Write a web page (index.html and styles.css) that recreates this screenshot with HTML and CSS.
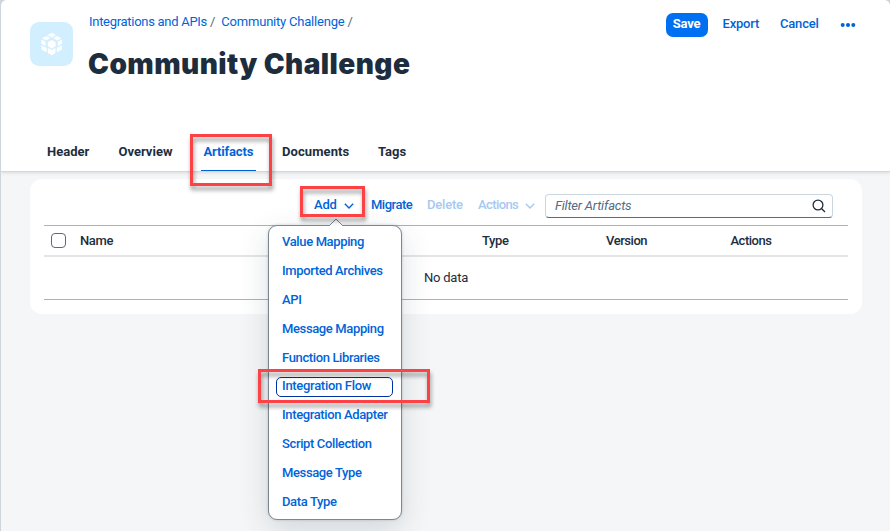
FILE: index.html
```html
<!DOCTYPE html>
<html lang="en">
<head>
<meta charset="utf-8">
<title>Community Challenge</title>
<link rel="stylesheet" href="styles.css">
</head>
<body>
<div class="page">
  <header class="header">
    <div class="header-top">
      <div class="avatar">
        <svg width="22" height="24" viewBox="0 0 22 24" fill="#fff">
          <path d="M10.700.700L15 3.100L10.700 5.600L6.400 3.100Z"/>
          <path d="M5.300 3.900L9.300 6.100L5.100 8.500L1 6.200Z"/>
          <path d="M16.100 3.900L20.400 6.200L16.300 8.500L12.100 6.100Z"/>
          <path d="M.4 7.400L4.500 9.700V14L.4 11.700Z"/>
          <path d="M21 7.400L16.900 9.700V14L21 11.700Z"/>
          <path d="M10.700 8L14.600 10.200V14.200L10.700 16.500L6.800 14.200V10.200Z"/>
          <path d="M.4 13.300L5.600 16V20.200L.4 17.500Z"/>
          <path d="M21 13.300L15.800 16V20.200L21 17.500Z"/>
          <path d="M6.900 16L10.700 18.100L14.500 16V21L10.700 23.300L6.900 21Z"/>
        </svg>
      </div>
      <div class="titles">
        <nav class="crumbs"><a class="crumb-one">Integrations and APIs</a><span class="slash">/</span><a class="crumb-two">Community Challenge</a><span class="slash">/</span></nav>
        <h1>Community Challenge</h1>
      </div>
      <div class="actions">
        <button class="save">Save</button>
        <a class="export">Export</a>
        <a class="cancel">Cancel</a>
        <svg class="more" width="16" height="6" viewBox="0 0 16 6" fill="#0064d9"><circle cx="2.700" cy="3" r="2"/><circle cx="8" cy="3" r="2"/><circle cx="13.300" cy="3" r="2"/></svg>
      </div>
    </div>
    <nav class="tabs">
      <a class="tab t-header">Header</a>
      <a class="tab t-overview">Overview</a>
      <a class="tab t-artifacts">Artifacts</a>
      <a class="tab t-documents">Documents</a>
      <a class="tab t-tags">Tags</a>
    </nav>
  </header>

  <section class="card">
    <div class="toolbar">
      <a class="tool add">Add <svg width="10" height="6" viewBox="0 0 10 6"><path d="M.8.800L5 5L9.200.800"/></svg></a>
      <a class="tool migrate">Migrate</a>
      <a class="tool off delete">Delete</a>
      <a class="tool off acts">Actions <svg width="10" height="6" viewBox="0 0 10 6"><path d="M.8.800L5 5L9.200.800"/></svg></a>
      <div class="search"><span>Filter Artifacts</span>
        <svg width="14" height="14" viewBox="0 0 14 14"><circle cx="6" cy="6" r="4.900"/><path d="M9.700 9.700L13 13"/></svg>
      </div>
    </div>
    <div class="table">
      <div class="thead">
        <span class="check"></span>
        <span class="th name">Name</span>
        <span class="th type">Type</span>
        <span class="th version">Version</span>
        <span class="th act">Actions</span>
      </div>
      <div class="empty">No data</div>
    </div>
  </section>
</div>

<div class="menu">
  <svg class="arrow" width="16" height="8" viewBox="0 0 16 8"><path d="M1 8L8 1L15 8" /></svg>
  <a>Value Mapping</a>
  <a>Imported Archives</a>
  <a>API</a>
  <a>Message Mapping</a>
  <a>Function Libraries</a>
  <a class="focused">Integration Flow</a>
  <a>Integration Adapter</a>
  <a>Script Collection</a>
  <a>Message Type</a>
  <a>Data Type</a>
</div>

<div class="mark mark-tab"></div>
<div class="mark mark-add"></div>
<div class="mark mark-flow"></div>
</body>
</html>
```
FILE: styles.css
```css
* { box-sizing: border-box; }
body {
  margin: 0;
  width: 890px;
  height: 531px;
  overflow: hidden;
  position: relative;
  background: #cfd5dc;
  font-family: Roboto, "Noto Sans", sans-serif;
  font-size: 13px;
  line-height: 16px;
  color: #1d2d3e;
  white-space: nowrap;
}
.page {
  margin-left: 1px;
  height: 531px;
  background: #f5f6f7;
  border-radius: 6px 6px 0 0;
  overflow: hidden;
}
.header {
  height: 171px;
  background: #fff;
  box-shadow: 0 1px 0 #d5d8db, 0 2px 3px #d9dbde;
  display: flex;
  flex-direction: column;
  justify-content: space-between;
}
.header-top { display: flex; padding: 13px 34px 0 29px; }
.avatar {
  width: 43px;
  height: 44px;
  margin-top: 9px;
  border-radius: 9px;
  background: #d1efff;
  display: flex;
  align-items: center;
  justify-content: center;
}
.titles { margin-left: 16px; padding-top: 1px; }
.crumbs { display: flex; color: #0064d9; }
.crumb-one { letter-spacing: -.29px; }
.crumb-two { letter-spacing: -.21px; }
.slash { color: #556b82; margin: 0 6px 0 3px; }
h1 {
  margin: 16px 0 0 -1px;
  font: 900 28px/36px Inter, "Open Sans", sans-serif;
  letter-spacing: .45px;
}
.actions {
  margin-left: auto;
  height: 23px;
  display: flex;
  align-items: center;
  color: #0064d9;
  font-weight: 500;
  letter-spacing: -.2px;
}
.save {
  width: 42px;
  height: 24px;
  padding: 0 0 2px;
  border: 0;
  border-radius: 7px;
  background: #0070f2;
  color: #fff;
  font: 700 13px/16px Roboto, sans-serif;
  letter-spacing: -.2px;
}
.export { width: 57.500px; margin: 0 0 2px 15px; }
.cancel { width: 60px; margin-bottom: 2px; }
.more { margin-top: 1px; }
.tabs { display: flex; margin-left: 46px; height: 27px; font-weight: 700; }
.tab { height: 27px; }
.t-header { width: 71.500px; }
.t-overview { width: 82.500px; }
.t-artifacts {
  width: 55px;
  padding-left: 2.500px;
  margin-right: 26px;
  color: #0064d9;
  letter-spacing: -.15px;
  border-bottom: 1px solid #0064d9;
}
.t-documents { width: 96px; letter-spacing: .1px; }
.card {
  margin: 8px 28px 0 29px;
  height: 135px;
  padding: 15px 14px 0;
  border-radius: 12px;
  background: #fff;
}
.toolbar { display: flex; align-items: center; height: 24px; padding-left: 270px; }
.tool { color: #0064d9; font-weight: 500; position: relative; top: -1px; }
.tool svg { margin-left: 4px; fill: none; stroke: currentColor; stroke-width: 1.400; }
.off { color: #a6c9f2; }
.add { width: 57px; letter-spacing: -.2px; }
.migrate { width: 56px; letter-spacing: -.5px; }
.delete { width: 51px; letter-spacing: -.2px; }
.acts { width: 67px; letter-spacing: -.6px; }
.search {
  width: 288px;
  height: 24px;
  padding: 0 6px 0 9px;
  display: flex;
  align-items: center;
  justify-content: space-between;
  border: 1px solid #ccd6df;
  border-bottom-color: #556b82;
  border-radius: 4px;
  color: #556b82;
  font-style: italic;
  letter-spacing: -.22px;
}
.search svg { fill: none; stroke: #1d2d3e; stroke-width: 1.300; }
.table { margin-top: 7px; border-top: 1px solid #a8b3bd; border-bottom: 1px solid #a8b3bd; }
.thead {
  height: 31px;
  display: grid;
  grid-template-columns: 36px 402px 124px 124.500px 1fr;
  align-items: center;
  border-bottom: 2px solid #e5e5e5;
  font-weight: 500;
  letter-spacing: -.35px;
}
.version { letter-spacing: -.45px; }
.act { letter-spacing: -.5px; }
.check { width: 15px; height: 15px; margin-left: 7px; border: 1px solid #556b82; border-radius: 4px; }
.empty { height: 42px; line-height: 42px; text-align: center; letter-spacing: -.2px; }
.menu {
  position: absolute;
  left: 268px;
  top: 225px;
  width: 134px;
  height: 295px;
  padding: 1px 7px;
  border: 1px solid #7b8793;
  border-radius: 9px;
  background: #fff;
  box-shadow: 0 10px 30px rgba(34, 53, 72, .16), 0 0 3px rgba(34, 53, 72, .2);
  display: flex;
  flex-direction: column;
  color: #0064d9;
  font-weight: 500;
  letter-spacing: -.37px;
}
.menu a { height: 29px; padding-left: 6px; line-height: 29px; flex: none; }
.menu a.focused {
  height: 20px;
  margin: 5px 0 3px;
  width: 117px;
  padding-left: 5px;
  line-height: 16px;
  letter-spacing: -.3px;
  border: 1px solid #0032a5;
  border-radius: 5px;
}
.arrow { position: absolute; left: 59px; top: -8px; fill: #fff; stroke: #7b8793; stroke-width: 1; }
.mark { position: absolute; border: 3px solid #fd4245; filter: drop-shadow(1px 4px 2px rgba(0, 0, 0, .4)); }
.mark-tab { left: 190px; top: 134px; width: 82px; height: 52px; }
.mark-add { left: 300px; top: 186px; width: 65px; height: 31px; }
.mark-flow { left: 258px; top: 369px; width: 172px; height: 34px; }
```
